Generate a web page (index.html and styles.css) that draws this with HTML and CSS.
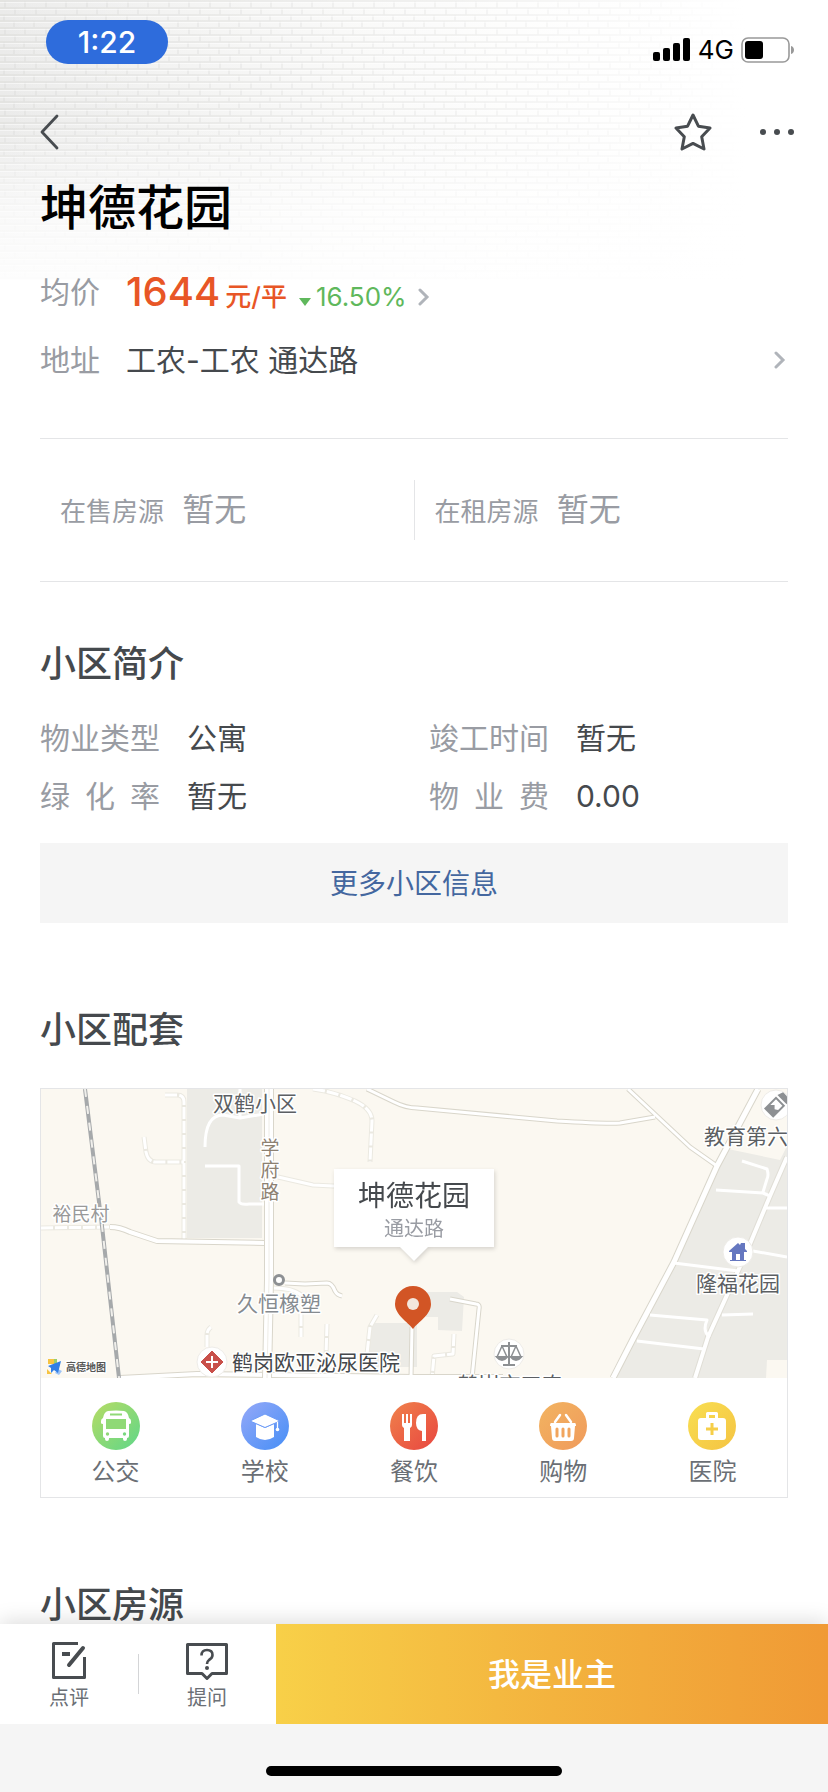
FILE: index.html
```html
<!DOCTYPE html>
<html lang="zh-CN">

<head>
  <meta charset="UTF-8" />
  <meta name="viewport" content="width=device-width, initial-scale=1.0" />
  <title>坤德花园</title>
  <link rel="stylesheet" href="styles.css">
</head>

<body>
  <!-- brick wall behind the header -->
  <div class="wall">
    <svg width="100%" height="100%" aria-hidden="true">
      <defs>
        <pattern id="bricks" width="41" height="27" patternUnits="userSpaceOnUse">
          <path d="M0 1H41M0 8H41M0 15H41M0 21H41M5 1V8M25 1V8M15 8V15M36 8V15M4 15V21M24 15V21M14 21V28M34 21V28" fill="none" stroke="#dededc" stroke-width="1.3" />
          <path d="M0 2.5H41M0 9.5H41M0 16.5H41M0 22.5H41" fill="none" stroke="#fff" stroke-width="1" opacity=".5" />
        </pattern>
      </defs>
      <rect width="100%" height="100%" fill="url(#bricks)" />
    </svg>
  </div>

  <header>
    <div class="status-bar">
      <div class="time">1:22</div>
      <div class="status-icons">
        <svg width="38" height="24" viewBox="0 0 38 24" aria-hidden="true">
          <rect x="0" y="14" width="7" height="9" rx="2" />
          <rect x="10" y="10" width="7" height="13" rx="2" />
          <rect x="20" y="5" width="7" height="18" rx="2" />
          <rect x="30" y="0" width="7" height="23" rx="2" />
        </svg>
        <span class="network">4G</span>
        <svg width="54" height="26" viewBox="0 0 54 26" aria-hidden="true">
          <rect x="1" y="1" width="47" height="24" rx="6" fill="#fff" stroke="#999" stroke-width="1.6" />
          <rect x="4" y="4" width="18" height="18" rx="3" />
          <path d="M50 9c4 1 4 7 0 8z" fill="#999" />
        </svg>
      </div>
    </div>
    <nav class="nav-bar">
      <button class="icon-btn" aria-label="返回">
        <svg width="20" height="36" viewBox="0 0 20 36"><path d="M17 2L2 18l15 16" fill="none" stroke="#484c50" stroke-width="2.8" stroke-linecap="round" stroke-linejoin="round" /></svg>
      </button>
      <div class="nav-actions">
        <button class="icon-btn" aria-label="收藏">
          <svg width="38" height="38" viewBox="0 0 38 38"><path d="M19 2l5.4 11.2L36 15l-8.300 8.800L30 36l-11-5.600L8 36l2.300-12.200L2 15l11.600-1.800z" fill="none" stroke="#484c50" stroke-width="3" stroke-linejoin="round" /></svg>
        </button>
        <button class="icon-btn" aria-label="更多">
          <svg width="34" height="8" viewBox="0 0 34 8"><g fill="#484c50"><circle cx="3" cy="4" r="3" /><circle cx="17" cy="4" r="3" /><circle cx="31" cy="4" r="3" /></g></svg>
        </button>
      </div>
    </nav>
  </header>

  <main>
    <h1>坤德花园</h1>

    <div class="summary">
      <a class="summary-row" href="#">
        <span class="label">均价</span>
        <span class="price">1644</span>
        <span class="unit">元/平</span>
        <svg class="down" width="12" height="8" viewBox="0 0 12 8"><path d="M0 0h12L6 8z" fill="#5fb85c" /></svg>
        <span class="rate">16.50%</span>
        <svg class="arrow" width="12" height="18" viewBox="0 0 12 18"><path d="M2 2l7 7-7 7" fill="none" stroke="#b0b4ba" stroke-width="3" stroke-linecap="round" /></svg>
      </a>
      <a class="summary-row address" href="#">
        <span class="label">地址</span>
        <span class="value">工农-工农 通达路</span>
        <svg class="arrow" width="12" height="18" viewBox="0 0 12 18"><path d="M2 2l7 7-7 7" fill="none" stroke="#b0b4ba" stroke-width="3" stroke-linecap="round" /></svg>
      </a>
    </div>

    <div class="stock">
      <div class="stock-item">在售房源 <span>暂无</span></div>
      <div class="stock-item">在租房源 <span>暂无</span></div>
    </div>

    <section>
      <h2>小区简介</h2>
      <dl class="info">
        <div><dt>物业类型</dt><dd>公寓</dd></div>
        <div><dt>竣工时间</dt><dd>暂无</dd></div>
        <div><dt>绿 化 率</dt><dd>暂无</dd></div>
        <div><dt>物 业 费</dt><dd>0.00</dd></div>
      </dl>
      <button class="more-btn">更多小区信息</button>
    </section>

    <section>
      <h2>小区配套</h2>
      <div class="card">
        <div class="map">
          <svg class="map-canvas" viewBox="0 0 746 289" preserveAspectRatio="xMidYMid slice">
            <rect width="746" height="289" fill="#fbf8f1" />
            <!-- blocks -->
            <g fill="#ecebe6">
              <path d="M146 0h75v149h-75z" />
              <path d="M687 60l52 11 7-14v232H572l20-39 41-77 43-96z" />
              <path d="M329 234h47v44h-50z" />
              <path d="M385 203h31l7 5-2 34-24-1v-13h-12z" />
            </g>
            <path d="M726 271h20v18h-21z" fill="#fbf8f1" />
            <!-- lanes -->
            <g fill="none" stroke="#ebe9e1" stroke-width="5" stroke-linejoin="round">
              <path d="M124 6h12q7 0 7 7v137M103 48l2 15q2 10 10 10h28M272 0q22 3 42 12 17 8 17 20l-2 41" />
              <path d="M0 139l69-1M237 88l35 8 20 1h20M232 199q20 0 28 7M260 225v23M286 235l-1 32M166 258v-12q0-5 4-8M336 226l-7 12-3 27" />
              <path d="M413 245l-1 20-19 2-2 22" />
            </g>
            <g fill="none" stroke="#fff" stroke-width="3" stroke-linejoin="round">
              <path d="M124 6h12q7 0 7 7v137M103 48l2 15q2 10 10 10h28M272 0q22 3 42 12 17 8 17 20l-2 41" stroke-dasharray="12 2" />
              <path d="M0 139l69-1M166 258v-12q0-5 4-8M336 226l-7 12-3 27M260 225v23M286 235l-1 32M413 245l-1 20-19 2-2 22" stroke-dasharray="12 2" />
              <path d="M237 88l35 8 20 1h20M232 199q20 0 28 7" />
              <path d="M164 58q0-32 18-32l17 3 24-4M199 0v29M164 77h34v36q2 3 10 2h15" />
            </g>
            <!-- roads -->
            <g fill="none" stroke="#d9d6cb" stroke-width="6" stroke-linejoin="round">
              <path d="M69 138q10 0 20 5l27 9 108 2" />
              <path d="M326 0l27 13q12 6 23 6l140 13q50 3 63 2l35-6M587 0l62 58 27 19" stroke-width="5" />
              <path d="M717 0l-41 77-43 96-41 77-20 39" stroke-width="7" />
              <path d="M244 194l20 1 22-1q5 0 8 8 2 4 7 5M371 238l-1 51M409 210l26 5q4 0 3 5l-7 69" stroke-width="5" />
              <path d="M746 68l-17 39-23 55-39 86-13 41" stroke="#e0ded6" />
              <path d="M79 289l77-4 216 3h90" />
            </g>
            <g fill="none" stroke="#fff" stroke-width="4" stroke-linejoin="round">
              <path d="M69 138q10 0 20 5l27 9 108 2" />
              <path d="M326 0l27 13q12 6 23 6l140 13q50 3 63 2l35-6M587 0l62 58 27 19" stroke-width="3" />
              <path d="M717 0l-41 77-43 96-41 77-20 39" stroke-width="5" />
              <path d="M244 194l20 1 22-1q5 0 8 8 2 4 7 5M371 238l-1 51M409 210l26 5q4 0 3 5l-7 69" stroke-width="3" />
              <path d="M746 68l-17 39-23 55-39 86-13 41" />
              <path d="M79 289l77-4 216 3h90" />
              <path d="M701 72l25 8q2 6 0 10l-4 13M675 101l47 3 7 3M725 119h21M633 174l64 8M712 162l34 6M609 226l57 5q-5 12 3 17M596 252l67 8M681 226l31-1" stroke-width="3" />
            </g>
            <path d="M228 0v191l-2 98" fill="none" stroke="#d9d6cb" stroke-width="10" />
            <path d="M228 0v191l-2 98" fill="none" stroke="#fff" stroke-width="8" />
            <path d="M228 0v191l-2 98" fill="none" stroke="#eeece6" stroke-width="1" />
            <!-- railway -->
            <path d="M44 0l17 137 17 152" fill="none" stroke="#a6a9ab" stroke-width="4" />
            <path d="M44 0l17 137 17 152" fill="none" stroke="#f0efeb" stroke-width="2" stroke-dasharray="8 9" />

            <g class="map-text" font-size="21" text-anchor="middle">
              <text x="214" y="22" fill="#5c5f63">双鹤小区</text>
              <text x="238" y="222" fill="#868b90">久恒橡塑</text>
              <text x="275" y="281" fill="#45484c">鹤岗欧亚泌尿医院</text>
              <text x="705" y="55" fill="#5c5f63">教育第六</text>
              <text x="697" y="202" fill="#5c5f63">隆福花园</text>
              <text x="469" y="303" fill="#5c5f63">鹤岗市工农</text>
            </g>
            <g class="map-text" font-size="19" text-anchor="middle" fill="#8d8172">
              <text x="229" y="66">学</text>
              <text x="229" y="88">府</text>
              <text x="229" y="110">路</text>
              <text x="40" y="132" fill="#999">裕民村</text>
            </g>

            <!-- points -->
            <circle cx="238" cy="191" r="4.500" fill="#fff" stroke="#8d9093" stroke-width="3" />
            <g fill="#fff" stroke="#eeece8">
              <circle cx="171" cy="273" r="15" />
              <circle cx="735" cy="16" r="15" />
              <circle cx="697" cy="163" r="15" />
              <circle cx="468" cy="265" r="15" />
            </g>
            <path d="M171 262l11 11-11 11-11-11z" fill="#c9504a" stroke="#c9504a" stroke-linejoin="round" />
            <path d="M171 267v12M165 273h12" stroke="#fff" stroke-width="2" />
            <g transform="rotate(45 735 16)">
              <path d="M729 10h13v17h-13z" fill="#8d9093" />
              <path d="M731 12h9v6l-3 2-3-3-3 3z" fill="#fff" />
              <path d="M729 8l2-6h9l2 6z" fill="#8d9093" />
            </g>
            <path d="M697 154l-9 8v1h3v8h-2v1h16v-1h-2v-8h3v-1l-2-2v-6h-4l-1 2z" fill="#6577c0" />
            <path d="M695 165h4v6h-4z" fill="#fff" />
            <g fill="none" stroke="#8d9093" stroke-width="2">
              <path d="M468 253v22M460 257h16M462 276h12" />
              <path d="M461 257l-5 11M461 257l5 11M475 257l-5 11M475 257l5 11" stroke-width="1.500" />
              <path d="M456 268h10q-5 6-10 0zM470 268h10q-5 6-10 0z" fill="#8d9093" />
            </g>
            <path d="M372 240c-5-7-18-14-18-25a18 18 0 0 1 36 0c0 11-13 18-18 25z" fill="#d25525" />
            <circle cx="372" cy="215" r="6" fill="#f3e6dc" />

            <!-- map provider -->
            <path d="M7 270h6v5H7zM6 280l5 5H6z" fill="#f6c443" />
            <path d="M13 270h3v5h-3z" fill="#98cf6c" />
            <path d="M17 280l4 2-3 4-4-2z" fill="#9dc3f5" />
            <path d="M20 272l-3 12-4-3-3 3v-5l-3-2z" fill="#2f7ee6" />
            <text class="map-text" x="25" y="282" font-size="10" font-weight="700" fill="#555">高德地图</text>
          </svg>
          <div class="popup">
            <strong>坤德花园</strong>
            <span>通达路</span>
          </div>
        </div>

        <div class="pois">
          <a href="#">
            <svg width="48" height="48" viewBox="0 0 48 48">
              <defs><linearGradient id="g1" x1="0" y1="0" x2="1" y2="1"><stop offset="0.1" stop-color="#aedb68" /><stop offset="0.9" stop-color="#68d785" /></linearGradient></defs>
              <circle cx="24" cy="24" r="24" fill="url(#g1)" />
              <path d="M16 9q8-1 16 0 4 1 5 7 2 1 2 3v2q0 1-2 1v12q0 2-2 2v1q0 2-2 2t-2-2v-1H17v1q0 2-2 2t-2-2v-1q-2 0-2-2V22q-2 0-2-1v-2q0-2 2-3 1-6 5-7z" fill="#fff" />
              <path d="M18 11.500h12v2H18zM14 17h20v10H14z" fill="#8fd976" />
              <circle cx="15.500" cy="32" r="1.700" fill="#8fd976" /><circle cx="32.500" cy="32" r="1.700" fill="#78d87f" />
            </svg>
            公交
          </a>
          <a href="#">
            <svg width="48" height="48" viewBox="0 0 48 48">
              <defs><linearGradient id="g2" x1="0" y1="0" x2="1" y2="1"><stop offset="0.1" stop-color="#8da6f8" /><stop offset="0.9" stop-color="#4e91f6" /></linearGradient></defs>
              <circle cx="24" cy="24" r="24" fill="url(#g2)" />
              <path d="M15 22l9 4 9-4v13q-9 6-18 0z" fill="#fff" />
              <path d="M24 12l15 7-15 6.500L9 19z" fill="#fff" stroke="#6c9bf7" stroke-width="1" />
              <path d="M36.500 20v6" stroke="#fff" stroke-width="1.300" /><circle cx="36.500" cy="27.500" r="1.800" fill="#fff" />
            </svg>
            学校
          </a>
          <a href="#">
            <svg width="48" height="48" viewBox="0 0 48 48">
              <defs><linearGradient id="g3" x1="0" y1="0" x2="1" y2="1"><stop offset="0.1" stop-color="#ef7c4a" /><stop offset="0.9" stop-color="#e94c41" /></linearGradient></defs>
              <circle cx="24" cy="24" r="24" fill="url(#g3)" />
              <path d="M12 12h2v9h2v-9h2v9h2v-9h2v11q0 2-2 3v13h-6V26q-2-1-2-3zM36 12v27h-4V29q-6-1-6-8 0-9 7-9z" fill="#fff" />
            </svg>
            餐饮
          </a>
          <a href="#">
            <svg width="48" height="48" viewBox="0 0 48 48">
              <defs><linearGradient id="g4" x1="0" y1="0" x2="1" y2="1"><stop offset="0.1" stop-color="#f2b160" /><stop offset="0.9" stop-color="#f09d5c" /></linearGradient></defs>
              <circle cx="24" cy="24" r="24" fill="url(#g4)" />
              <path d="M16 20l5-7M32 20l-5-7" stroke="#fff" stroke-width="2.500" stroke-linecap="round" />
              <path d="M12 21h24q1 0 1 3h-1l-1 12q0 3-3 3H16q-3 0-3-3l-1-12h-1q0-3 1-3z" fill="#fff" />
              <path d="M18 27v7M24 27v7M30 27v7" stroke="#f1a55e" stroke-width="3" stroke-linecap="round" />
            </svg>
            购物
          </a>
          <a href="#">
            <svg width="48" height="48" viewBox="0 0 48 48">
              <defs><linearGradient id="g5" x1="0" y1="0" x2="1" y2="1"><stop offset="0.1" stop-color="#f8dc50" /><stop offset="0.9" stop-color="#f5c644" /></linearGradient></defs>
              <circle cx="24" cy="24" r="24" fill="url(#g5)" />
              <path d="M19.500 17v-5.500h9V17" fill="none" stroke="#fff" stroke-width="3" stroke-linejoin="round" />
              <rect x="10" y="16" width="28" height="22" rx="3" fill="#fff" />
              <path d="M24 21v12M18 27h12" stroke="#f6ce48" stroke-width="3" />
            </svg>
            医院
          </a>
        </div>
      </div>
    </section>

    <section>
      <h2>小区房源</h2>
    </section>
  </main>

  <footer class="bottom">
    <div class="bottom-bar">
      <button class="tool">
        <svg width="38" height="40" viewBox="0 0 38 40"><g fill="none" stroke="#484c50"><path d="M28 3.500H3.500v34h31V17" stroke-width="3" stroke-linejoin="round" /><path d="M33 8L19 25" stroke-width="4" stroke-linecap="round" /><path d="M12 14h8" stroke-width="4" /></g></svg>
        点评
      </button>
      <button class="tool">
        <svg width="42" height="40" viewBox="0 0 42 40"><g fill="none" stroke="#484c50" stroke-linejoin="round"><path d="M1.500 4.500h39v29H26l-5 5-5-5H1.500z" stroke-width="3" /><path d="M15.500 15.500q0-5.500 5.500-5.500t5.500 5q0 3-3.500 5-2 1.500-2 4" stroke-width="2.600" /></g><circle cx="21" cy="28" r="2" fill="#484c50" /></svg>
        提问
      </button>
      <button class="owner-btn">我是业主</button>
    </div>
    <div class="home-area">
      <div class="home-indicator"></div>
    </div>
  </footer>
</body>

</html>
```
FILE: styles.css
```css
* {
  margin: 0;
  padding: 0;
  box-sizing: border-box;
}

body {
  font-family: Inter, "Noto Sans CJK SC", sans-serif;
  font-size: 30px;
  color: #45494d;
  background: #fff;
}

a {
  color: inherit;
  text-decoration: none;
}

button {
  font-family: inherit;
  border: none;
  background: none;
  cursor: pointer;
}

svg {
  display: block;
  flex-shrink: 0;
}

/* Header */
.wall {
  position: absolute;
  top: 0;
  left: 0;
  right: 0;
  height: 280px;
  z-index: -1;
  background: linear-gradient(to right, #e9e9e8, #f2f2f1 30%, #fafaf9 60%, #fff 90%);
}

.wall::after {
  content: "";
  position: absolute;
  inset: 0;
  background:
    linear-gradient(to bottom, rgba(255, 255, 255, 0) 45%, rgba(255, 255, 255, 0.7) 75%, rgba(255, 255, 255, 0.9)),
    linear-gradient(to right, rgba(255, 255, 255, 0.1), rgba(255, 255, 255, 0.5) 55%, #fff 90%);
}

.status-bar {
  display: flex;
  justify-content: space-between;
  align-items: flex-end;
  padding: 20px 33px 0 46px;
}

.time {
  width: 122px;
  height: 44px;
  line-height: 44px;
  border-radius: 22px;
  background: #2e6cdc;
  color: #fff;
  font-size: 30px;
  font-weight: 500;
  text-align: center;
}

.status-icons {
  display: flex;
  align-items: center;
  gap: 7px;
  color: #000;
}

.network {
  font-size: 26px;
  line-height: 28px;
}

.nav-bar {
  display: flex;
  justify-content: space-between;
  align-items: center;
  height: 88px;
  margin-top: 24px;
  padding: 0 34px 0 40px;
}

.nav-actions {
  display: flex;
  align-items: center;
  gap: 48px;
}

/* Content */
main {
  padding: 0 40px 160px;
}

h1 {
  font-size: 48px;
  font-weight: 500;
  line-height: 64px;
  color: #000;
}

h2 {
  font-size: 36px;
  font-weight: 500;
  line-height: 48px;
}

.summary {
  padding: 24px 0 50px;
  border-bottom: 1px solid #e4e5e7;
}

.summary-row {
  display: flex;
  align-items: baseline;
  height: 56px;
  line-height: 56px;
}

.address {
  align-items: center;
  margin-top: 12px;
}

.address .arrow {
  margin-left: auto;
  margin-right: 2px;
}

.label {
  align-self: flex-start;
  width: 86px;
  color: #999ca3;
}

.price {
  font-size: 40px;
  font-weight: 500;
  color: #e85626;
}

.unit {
  margin-left: 5px;
  font-size: 26px;
  font-weight: 500;
  color: #e85626;
}

.down {
  margin: 0 5px 4px 12px;
}

.rate {
  font-size: 26px;
  color: #5fb85c;
}

.rate + .arrow {
  margin-left: 11px;
}

.stock {
  display: flex;
  padding: 41px 0;
  border-bottom: 1px solid #e4e5e7;
}

.stock-item {
  flex: 1;
  height: 60px;
  padding-left: 20px;
  font-size: 26px;
  line-height: 60px;
  color: #999ca3;
}

.stock-item + .stock-item {
  border-left: 1px solid #e4e5e7;
}

.stock-item span {
  margin-left: 11px;
  font-size: 32px;
}

section {
  padding-top: 83px;
}

.stock + section {
  padding-top: 58px;
}

.info {
  display: grid;
  grid-template-columns: 52% 48%;
  row-gap: 14px;
  margin: 28px 0 25px;
}

.info div {
  display: flex;
  height: 44px;
  line-height: 44px;
}

.info dt {
  width: 120px;
  margin-right: 27px;
  color: #999ca3;
  text-align-last: justify;
}

.more-btn {
  display: block;
  width: 100%;
  height: 80px;
  padding-bottom: 2px;
  background: #f5f5f5;
  color: #44679f;
  font-size: 28px;
}

/* Map card */
.card {
  margin-top: 34px;
  border: 1px solid #e4e5e7;
}

.map {
  position: relative;
  height: 289px;
}

.map-canvas {
  width: 100%;
  height: 100%;
}

.map-text {
  paint-order: stroke;
  stroke: #fff;
  stroke-width: 3px;
  stroke-linejoin: round;
}

.popup {
  position: absolute;
  top: 80px;
  left: 50%;
  transform: translateX(-50%);
  display: flex;
  flex-direction: column;
  align-items: center;
  padding: 8px 24px 4px;
  background: #fff;
  filter: drop-shadow(1px 2px 2px rgba(0, 0, 0, 0.15));
}

.popup::after {
  content: "";
  position: absolute;
  top: 100%;
  left: 50%;
  margin-left: -14px;
  border: 14px solid transparent;
  border-top-color: #fff;
  border-bottom: none;
}

.popup strong {
  font-size: 28px;
  font-weight: 400;
  line-height: 38px;
}

.popup span {
  font-size: 20px;
  line-height: 28px;
  color: #999ca3;
}

.pois {
  display: flex;
  padding: 24px 0 7px;
}

.pois a {
  flex: 1;
  display: flex;
  flex-direction: column;
  align-items: center;
  gap: 4px;
  font-size: 24px;
  line-height: 36px;
  color: #6b6f75;
}

/* Bottom bar */
.bottom {
  position: fixed;
  left: 0;
  right: 0;
  bottom: 0;
  background: #f5f5f5;
}

.bottom-bar {
  display: flex;
  height: 100px;
  background: #fff;
  box-shadow: 0 -2px 20px rgba(0, 0, 0, 0.15);
}

.tool {
  position: relative;
  flex: 1;
  display: flex;
  flex-direction: column;
  align-items: center;
  padding-top: 16px;
  gap: 4px;
  font-size: 20px;
  line-height: 28px;
  color: #6b6f75;
}

.tool + .tool::before {
  content: "";
  position: absolute;
  left: 0;
  top: 30px;
  height: 40px;
  border-left: 1px solid #d4d5d7;
}

.owner-btn {
  flex: 4;
  padding-bottom: 4px;
  background: linear-gradient(to right, #f8d048, #f3b33e 50%, #f09a35);
  color: #fff;
  font-size: 32px;
  font-weight: 500;
}

.home-area {
  position: relative;
  height: 68px;
  padding-top: 42px;
  background: #f5f5f5;
}

.home-indicator {
  width: 296px;
  height: 10px;
  margin: 0 auto;
  border-radius: 5px;
  background: #000;
}
```
